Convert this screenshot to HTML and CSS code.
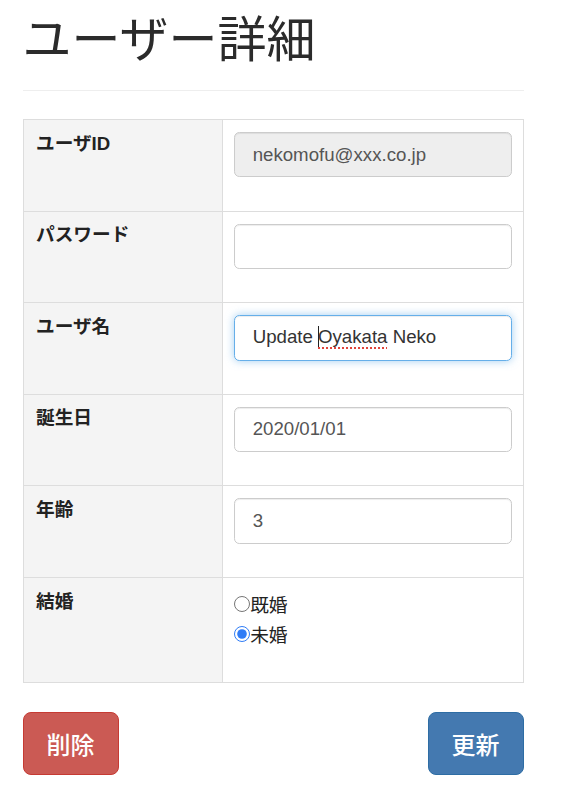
FILE: index.html
```html
<!DOCTYPE html>
<html lang="ja">
<head>
<meta charset="utf-8">
<title>ユーザー詳細</title>
<link rel="stylesheet" href="styles.css">
</head>
<body>
<div class="container">
  <h1 class="page-title">ユーザー詳細</h1>
  <hr class="divider">
  <table class="detail-table">
    <tr>
      <th>ユーザID</th>
      <td><input class="form-control" type="text" value="nekomofu@xxx.co.jp" disabled></td>
    </tr>
    <tr>
      <th>パスワード</th>
      <td><input class="form-control" type="password" value=""></td>
    </tr>
    <tr>
      <th>ユーザ名</th>
      <td><div class="form-control focused">Update <span class="caret"></span><span class="misspelled">Oyakata</span> Neko</div></td>
    </tr>
    <tr>
      <th>誕生日</th>
      <td><input class="form-control" type="text" value="2020/01/01"></td>
    </tr>
    <tr>
      <th>年齢</th>
      <td><input class="form-control" type="text" value="3"></td>
    </tr>
    <tr class="radio-row">
      <th>結婚</th>
      <td>
        <label class="radio-line"><input class="radio-input" type="radio" name="marriage">既婚</label>
        <label class="radio-line"><input class="radio-input" type="radio" name="marriage" checked>未婚</label>
      </td>
    </tr>
  </table>
  <div class="actions">
    <button class="btn btn-danger">削除</button>
    <button class="btn btn-primary">更新</button>
  </div>
</div>
</body>
</html>
```
FILE: styles.css
```css
html, body {
  margin: 0;
  padding: 0;
  background: #fff;
}
body {
  font-family: "Liberation Sans", "Noto Sans CJK JP", sans-serif;
  font-size: 18.67px;
  line-height: 26.67px;
  color: #333;
}
.container {
  width: 501px;
  margin-left: 22.5px;
}
.page-title {
  font-family: "Noto Sans CJK JP", sans-serif;
  font-weight: 400;
  font-size: 49px;
  line-height: 72px;
  margin: 0;
  padding: 0;
  color: #2b2b2b;
}
.divider {
  border: 0;
  border-top: 1.33px solid #eee;
  margin: 18px 0 28px 0;
}
.detail-table {
  width: 501px;
  border-collapse: collapse;
  border: 1.33px solid #ddd;
}
.detail-table th,
.detail-table td {
  border: 1.33px solid #ddd;
  vertical-align: top;
  padding: 10.67px;
  height: 69.3px;
}
.detail-table th {
  width: 175px;
  padding-left: 12.5px;
  background: #f4f4f4;
  text-align: left;
  font-weight: 700;
  font-family: "Liberation Sans", "Noto Sans CJK JP", sans-serif;
  color: #222;
}
.detail-table td {
  background: #fff;
  padding-left: 11.5px;
}
.form-control {
  display: block;
  box-sizing: border-box;
  width: 100%;
  height: 45.33px;
  margin: 1.33px 0 0 0;
  padding: 8px 17.5px;
  font-family: "Liberation Sans", "Noto Sans CJK JP", sans-serif;
  font-size: 18.67px;
  line-height: 26.67px;
  color: #555;
  background: #fff;
  border: 1.33px solid #ccc;
  border-radius: 5.33px;
  box-shadow: inset 0 1px 1px rgba(0,0,0,.075);
  outline: none;
}
.form-control:disabled {
  background: #eee;
  color: #555;
}
.focused {
  border-color: #66afe9;
  box-shadow: inset 0 1px 1px rgba(0,0,0,.075), 0 0 8px rgba(102,175,233,.6);
  color: #333;
  white-space: nowrap;
}
.caret {
  display: inline-block;
  width: 1px;
  height: 21px;
  background: #222;
  vertical-align: -4px;
  margin-right: -1px;
}
.misspelled {
  text-decoration: underline dotted #e0443a;
  text-decoration-thickness: 2px;
  text-underline-offset: 4px;
}
.radio-row td,
.radio-row th {
  height: 82.5px;
}
.radio-row td {
  padding-top: 11px;
}
.radio-line {
  display: flex;
  align-items: center;
  height: 30px;
  font-family: "Noto Sans CJK JP", sans-serif;
  font-size: 18.67px;
  color: #222;
}
.radio-input {
  flex: none;
  margin: 0;
  width: 16px;
  height: 16px;
  accent-color: #2f7cf6;
}
.actions {
  display: flex;
  justify-content: space-between;
  margin-top: 29px;
}
.btn {
  box-sizing: border-box;
  width: 96px;
  height: 63px;
  border-radius: 8px;
  font-family: "Noto Sans CJK JP", sans-serif;
  font-size: 24px;
  font-weight: 500;
  color: #fff;
  padding: 0;
  cursor: pointer;
}
.btn-danger {
  background: #cb5a54;
  border: 1.33px solid #c63a33;
}
.btn-primary {
  background: #4479b0;
  border: 1.33px solid #2e6da4;
}
```
